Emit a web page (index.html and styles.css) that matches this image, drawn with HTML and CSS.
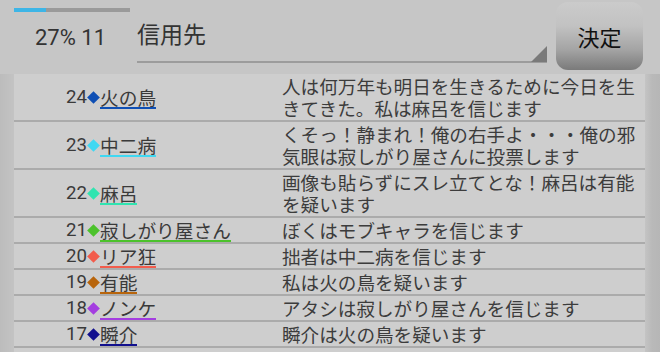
FILE: index.html
```html
<!DOCTYPE html>
<html lang="ja">
<head>
<meta charset="utf-8">
<link rel="stylesheet" href="styles.css">
</head>
<body>
<div class="screen">
  <header class="top">
    <div class="status">
      <div class="progress"><div class="progress-fill"></div></div>
      <div class="count">27% 11</div>
    </div>
    <div class="field">
      <div class="field-value">信用先</div>
      <div class="field-line"></div>
      <div class="field-corner"></div>
    </div>
    <button class="decide">決定</button>
  </header>
  <div class="log">
    <div class="row">
      <div class="who"><span class="num">24</span><span class="dia c24"></span><span class="name c24">火の鳥</span></div>
      <div class="msg">人は何万年も明日を生きるために今日を生きてきた。私は麻呂を信じます</div>
    </div>
    <div class="row">
      <div class="who"><span class="num">23</span><span class="dia c23"></span><span class="name c23">中二病</span></div>
      <div class="msg">くそっ！静まれ！俺の右手よ・・・俺の邪気眼は寂しがり屋さんに投票します</div>
    </div>
    <div class="row">
      <div class="who"><span class="num">22</span><span class="dia c22"></span><span class="name c22">麻呂</span></div>
      <div class="msg">画像も貼らずにスレ立てとな！麻呂は有能を疑います</div>
    </div>
    <div class="row">
      <div class="who"><span class="num">21</span><span class="dia c21"></span><span class="name c21">寂しがり屋さん</span></div>
      <div class="msg">ぼくはモブキャラを信じます</div>
    </div>
    <div class="row">
      <div class="who"><span class="num">20</span><span class="dia c20"></span><span class="name c20">リア狂</span></div>
      <div class="msg">拙者は中二病を信じます</div>
    </div>
    <div class="row">
      <div class="who"><span class="num">19</span><span class="dia c19"></span><span class="name c19">有能</span></div>
      <div class="msg">私は火の鳥を疑います</div>
    </div>
    <div class="row">
      <div class="who"><span class="num">18</span><span class="dia c18"></span><span class="name c18">ノンケ</span></div>
      <div class="msg">アタシは寂しがり屋さんを信じます</div>
    </div>
    <div class="row">
      <div class="who"><span class="num">17</span><span class="dia c17"></span><span class="name c17">瞬介</span></div>
      <div class="msg">瞬介は火の鳥を疑います</div>
    </div>
  </div>
</div>
</body>
</html>
```
FILE: styles.css
```css
* { box-sizing: border-box; }
html, body {
  margin: 0;
  padding: 0;
  width: 660px;
  height: 352px;
  overflow: hidden;
}
body {
  background: linear-gradient(90deg, #bcbcbc 0px, #c3c3c3 14px, #c4c4c4 645px, #b9b9b9 652px, #b6b6b6 660px);
  font-family: Roboto, "Noto Sans CJK JP", sans-serif;
  color: #3a3a3a;
}
.screen {
  display: flex;
  flex-direction: column;
  height: 352px;
}
.top {
  display: flex;
  height: 74px;
  background: #c6c6c6;
}
.status {
  width: 137px;
  padding: 8px 0 0 14px;
}
.progress {
  width: 116px;
  height: 4px;
  background: #9a9a9a;
}
.progress-fill {
  width: 32px;
  height: 4px;
  background: #3db5e6;
}
.count {
  margin: 13px 0 0 21px;
  font-family: Roboto, sans-serif;
  font-size: 22px;
  line-height: 26px;
  color: #333;
}
.field {
  position: relative;
  width: 410px;
  height: 74px;
}
.field-value {
  padding-top: 17px;
  font-family: "Noto Sans CJK JP", sans-serif;
  font-size: 23px;
  line-height: 32px;
  color: #333;
}
.field-line {
  position: absolute;
  left: 0;
  right: 0;
  top: 61px;
  height: 2px;
  background: #9c9c9c;
}
.field-corner {
  position: absolute;
  right: 0;
  top: 46px;
  width: 0;
  height: 0;
  border-left: 16px solid transparent;
  border-bottom: 16px solid #7a7a7a;
}
.decide {
  margin: 2px 0 0 9px;
  width: 87px;
  height: 68px;
  border: none;
  border-radius: 12px;
  background: linear-gradient(180deg, #cbcbcb 0%, #c2c2c2 35%, #a4a4a4 70%, #7a7a7a 100%);
  font-family: "Noto Sans CJK JP", sans-serif;
  font-size: 22px;
  color: #111;
  padding: 0;
}
.log {
  margin-left: 14px;
  width: 631px;
  background: #cecece;
  flex: 1;
}
.row {
  display: grid;
  grid-template-columns: 268px 1fr;
  border-bottom: 2px solid #ababab;
}
.who {
  display: flex;
  align-items: center;
  padding-left: 52px;
  font-size: 18.7px;
}
.num {
  font-family: Roboto, sans-serif;
  color: #3a3a3a;
  line-height: 21px;
}
.dia {
  display: inline-block;
  width: 9px;
  height: 9px;
  margin: 0 2px 0 2px;
  transform: rotate(45deg);
}
.name {
  display: inline-block;
  font-family: "Noto Sans CJK JP", sans-serif;
  line-height: 21px;
  border-bottom: 2px solid;
  color: #3a3a3a;
}
.msg {
  font-family: "Noto Sans CJK JP", sans-serif;
  font-size: 18.6px;
  line-height: 22px;
  padding: 1px 0;
  color: #3c3c3c;
}
.dia.c24 { background: #0f4fb4; }
.name.c24 { border-color: #0f4fb4; }
.dia.c23 { background: #40d8f2; }
.name.c23 { border-color: #40d8f2; }
.dia.c22 { background: #30e4b0; }
.name.c22 { border-color: #30e4b0; }
.dia.c21 { background: #4cc22c; }
.name.c21 { border-color: #4cc22c; }
.dia.c20 { background: #f25c4c; }
.name.c20 { border-color: #f25c4c; }
.dia.c19 { background: #b8650c; }
.name.c19 { border-color: #b8650c; }
.dia.c18 { background: #a43ee0; }
.name.c18 { border-color: #a43ee0; }
.dia.c17 { background: #12108e; }
.name.c17 { border-color: #12108e; }
```
